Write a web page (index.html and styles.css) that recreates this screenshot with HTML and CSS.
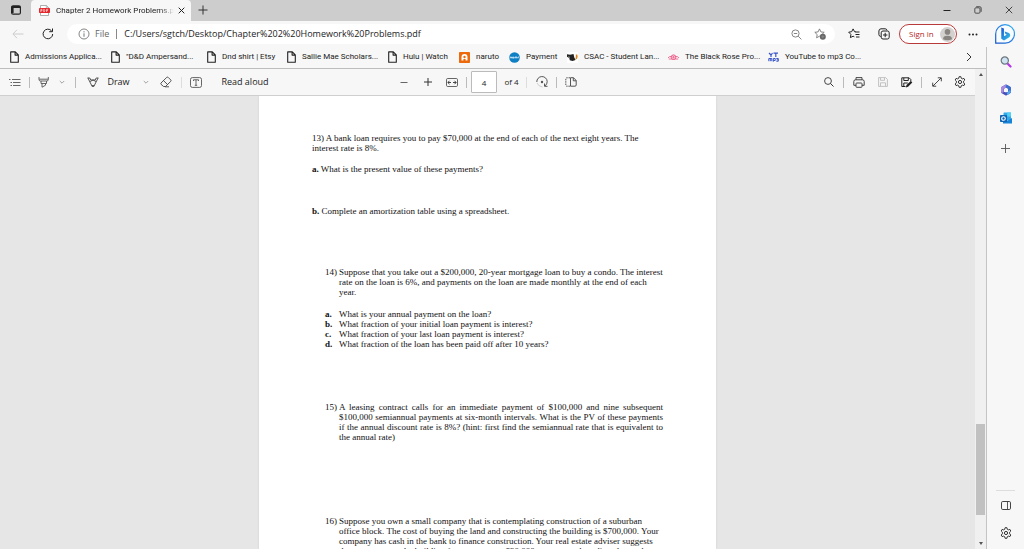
FILE: index.html
```html
<!DOCTYPE html>
<html lang="en">
<head>
<meta charset="utf-8">
<title>Chapter 2 Homework Problems.pdf</title>
<link rel="stylesheet" href="styles.css">
</head>
<body>
<svg class="defs" aria-hidden="true">
  <symbol id="doc" viewBox="0 0 9 12"><path d="M.7 .9h4.600l3 3v7.300H.7zM5.100 1v3.100h3.100" fill="none" stroke="#222" stroke-width="1.100" stroke-linejoin="round"/></symbol>
  <symbol id="chev" viewBox="0 0 6 6"><path d="M.8 2l2.200 2.200L5.200 2" fill="none" stroke="#999" stroke-width=".9"/></symbol>
  <symbol id="gear" viewBox="0 0 12 12"><path d="M5.100.7h1.800l.4 1.600 1 .6 1.600-.5.9 1.600-1.200 1.200v1.600l1.200 1.200-.9 1.600-1.600-.5-1 .6-.4 1.600H5.100l-.4-1.600-1-.6-1.600.5-.9-1.600 1.200-1.200V5.200L1.200 4l.9-1.600 1.600.5 1-.6z" fill="none" stroke="#333" stroke-width="1" stroke-linejoin="round"/><circle cx="6" cy="6" r="1.600" fill="none" stroke="#333"/></symbol>
</svg>

<header class="tabstrip">
  <button class="btn tabmenu" aria-label="Tab actions"><svg width="10" height="10" viewBox="0 0 10 10"><rect x=".6" y=".8" width="8.800" height="8.400" rx="1.500" fill="none" stroke="#222" stroke-width="1.200"/><path d="M.8 1.900h8.400M1.600 3v5" stroke="#222" stroke-width="2"/></svg></button>
  <div class="tab">
    <svg width="11" height="11" viewBox="0 0 11 11"><path d="M1.500.5h6l2 2v8h-8z" fill="#fff" stroke="#999" stroke-width=".8"/><path d="M7.300.6v2.200h2.200" fill="none" stroke="#999" stroke-width=".7"/><rect x="0" y="3" width="11" height="5" rx=".7" fill="#e5252a"/><path d="M1.800 7V4.300h1q1 .8 0 1.500h-.9M4.700 4.300V6.800h.6q1.200-1.200 0-2.400zM7.600 7V4.300h1.600M7.600 5.600h1.300" fill="none" stroke="#fff" stroke-width=".6"/></svg>
    <span class="tabtitle">Chapter 2 Homework Problems.pdf</span>
    <button class="btn tabclose" aria-label="Close tab"><svg width="7" height="7" viewBox="0 0 7 7"><path d="M.7.7l5.600 5.600M6.300.7L.7 6.300" stroke="#222" stroke-width="1"/></svg></button>
  </div>
  <button class="btn newtab" aria-label="New tab"><svg width="10" height="10" viewBox="0 0 10 10"><path d="M5 .5v9M.5 5h9" stroke="#333" stroke-width="1"/></svg></button>
  <div class="winctl">
    <button class="btn" aria-label="Minimize"><svg width="8" height="8" viewBox="0 0 8 8"><path d="M.5 4.500h7" stroke="#222"/></svg></button>
    <button class="btn" aria-label="Restore"><svg width="8" height="8" viewBox="0 0 8 8"><rect x=".8" y="1.800" width="5.200" height="5.400" rx="1" fill="none" stroke="#333" stroke-width=".8"/><path d="M2.200.7h3.500q1.500 0 1.500 1.500v3.600" fill="none" stroke="#333" stroke-width=".8"/></svg></button>
    <button class="btn" aria-label="Close"><svg width="8" height="8" viewBox="0 0 8 8"><path d="M.8.8l6.400 6.400M7.200.8L.8 7.200" stroke="#222" stroke-width=".8"/></svg></button>
  </div>
</header>

<div class="address-row">
  <button class="btn nav" aria-label="Back"><svg width="12" height="10" viewBox="0 0 12 10"><path d="M11.500 5H1M5 .8L.9 5 5 9.200" fill="none" stroke="#ccc"/></svg></button>
  <button class="btn nav" aria-label="Refresh"><svg width="12" height="12" viewBox="0 0 12 12"><path d="M10.700 6A4.800 4.800 0 1 1 9.600 2.900M10.500.5v3.200H7.200" fill="none" stroke="#222" stroke-width="1"/></svg></button>
  <div class="omnibox">
    <svg width="12" height="12" viewBox="0 0 12 12"><circle cx="6" cy="6" r="5" fill="none" stroke="#777" stroke-width=".9"/><path d="M6 5.300v3.500M6 3.200v1.200" stroke="#777"/></svg>
    <span class="scheme">File</span><span class="bar"></span>
    <input class="url" type="text" aria-label="Address" value="C:/Users/sgtch/Desktop/Chapter%202%20Homework%20Problems.pdf">
    <button class="btn" aria-label="Zoom out"><svg width="11" height="11" viewBox="0 0 11 11"><circle cx="4.500" cy="4.500" r="3.600" fill="none" stroke="#777" stroke-width=".9"/><path d="M7.200 7.200l3.200 3.200M2.800 4.500h3.400" stroke="#777" stroke-width=".9"/></svg></button>
    <button class="btn" aria-label="Add to favorites"><svg width="12" height="12" viewBox="0 0 12 12"><path d="M5.500.9l1.400 3 3.300.4-2.400 2.300.6 3.200-2.900-1.600-2.900 1.600.6-3.200L.8 4.300l3.300-.4z" fill="none" stroke="#777" stroke-width=".9" stroke-linejoin="round"/><circle cx="8.800" cy="8.700" r="3" fill="#666"/><path d="M8.800 7.200v3M7.300 8.700h3" stroke="#999" stroke-width=".6"/></svg></button>
  </div>
  <button class="btn fav" aria-label="Favorites"><svg width="12" height="12" viewBox="0 0 12 12"><path d="M8 3.900l-1.500-.2L5.100.9 3.700 3.700l-3 .5 2.200 2.200-.5 3.200 2.700-1.400 1.200.6M7.500 4h4M7.500 6.500h4M8 9h3.500" fill="none" stroke="#222" stroke-width="1" stroke-linejoin="round"/></svg></button>
  <button class="btn coll" aria-label="Collections"><svg width="12" height="12" viewBox="0 0 12 12"><path d="M2.700 8.500Q1 8.300.9 6.500V3Q1 .9 3 .8h4.200q1.500 0 1.800 1.600" fill="none" stroke="#222"/><rect x="3.200" y="3" width="8" height="8" rx="1.800" fill="none" stroke="#222"/><path d="M7.200 4.800v4.400M5 7h4.400" stroke="#222"/></svg></button>
  <button class="signin"><span>Sign in</span><svg width="15" height="15" viewBox="0 0 15 15"><circle cx="7.500" cy="7.500" r="7.500" fill="#d3d1cf"/><circle cx="7.500" cy="4.900" r="2.800" fill="#888581"/><path d="M3 12.200q0-3.400 4.500-3.400t4.500 3.400q-4.500 2-9 0z" fill="#888581"/></svg></button>
  <button class="btn dots" aria-label="More"><svg width="10" height="3" viewBox="0 0 10 3"><circle cx="1.500" cy="1.500" r="1" fill="#222"/><circle cx="5" cy="1.500" r="1" fill="#222"/><circle cx="8.500" cy="1.500" r="1" fill="#222"/></svg></button>
  <button class="btn bing" aria-label="Bing chat"><svg width="20" height="20" viewBox="0 0 20 20"><defs><linearGradient id="bg" x1="0" y1="1" x2="1" y2="0"><stop offset="0" stop-color="#1657c8"/><stop offset=".6" stop-color="#2b86ea"/><stop offset="1" stop-color="#35b9ee"/></linearGradient><linearGradient id="bb" x1="0" y1="0" x2="1" y2="1"><stop offset="0" stop-color="#1c56d6"/><stop offset="1" stop-color="#35c8e4"/></linearGradient></defs><path d="M.7 19.200V10A9.400 9.300 0 1 1 10 19.200z" fill="#f8fcff" stroke="url(#bg)" stroke-width="1.200"/><path d="M6.300 3.500l2.700 1v7.700l2.800-1.500-1.300-.8-.9-2.500 4.400 1.600q2.300 2.200.3 4.200L9 16.500l-2.700-1.700z" fill="url(#bb)"/></svg></button>
</div>

<div class="body">
  <div class="content">
    <nav class="bookmarks">
      <a href="#"><svg width="9" height="12"><use href="#doc"/></svg>Admissions Applica...</a>
      <a href="#"><svg width="9" height="12"><use href="#doc"/></svg>"D&amp;D Ampersand...</a>
      <a href="#"><svg width="9" height="12"><use href="#doc"/></svg>Dnd shirt | Etsy</a>
      <a href="#"><svg width="9" height="12"><use href="#doc"/></svg>Sallie Mae Scholars...</a>
      <a href="#"><svg width="9" height="12"><use href="#doc"/></svg>Hulu | Watch</a>
      <a href="#"><svg width="11" height="11" viewBox="0 0 11 11"><rect width="11" height="11" rx=".8" fill="#ec6a0c"/><path d="M2.500 8.500V5a3 3 0 0 1 6 0v3.500H6.600V7H4.400v1.500z" fill="#fff"/><circle cx="5.500" cy="5" r="1.200" fill="#ec6a0c"/></svg>naruto</a>
      <a href="#"><svg width="11" height="11" viewBox="0 0 11 11"><circle cx="5.500" cy="5.500" r="5.300" fill="#0f7fc4"/><path d="M1.300 6.300V5h1.200v1.300M3.600 5h1.100v1.200H3.600zM5.900 6.300V5h1v1.300M6.900 5h1v1.300M9 6.300V5h1" fill="none" stroke="#dff2ff" stroke-width=".8"/></svg>Payment</a>
      <a href="#"><svg width="11" height="11" viewBox="0 0 11 11"><rect width="11" height="11" fill="#fff"/><path d="M0 2.200l3 .6 3.500-.8.8 3.500 1.200 2.500-3 1-2.700-.7-.5-2.300L0 4.700z" fill="#222"/><path d="M8.800 2.500h1.400q1.500 4-2 5.500.8-2.500.6-5.500z" fill="#d98420"/><path d="M1.500 4.500l1.500 1" stroke="#aaa" stroke-width=".8"/></svg>CSAC - Student Lan...</a>
      <a href="#"><svg width="11" height="7" viewBox="0 0 11 7"><path d="M0 4q1.500-2 3-1.500M11 4Q9.500 2 8 2.500M.8 5h9.400" fill="none" stroke="#ee6c93"/><circle cx="5.500" cy="3.200" r="2.300" fill="#fbd3df" stroke="#ee5b87"/><path d="M4.200 3.200h2.600M5.500 2v2.500" stroke="#ee5b87" stroke-width=".7"/></svg>The Black Rose Pro...</a>
      <a href="#"><svg width="11" height="10" viewBox="0 0 11 10"><path d="M1 1l2 2 1.500-2M3 3v2M5.500 1.200H10M7.800 1.200V5" fill="none" stroke="#3a56c8" stroke-width="1.200"/><path d="M.8 9.200V6.500h3v2.700M2.300 6.500v2.700M5.300 9.700V6.500h1.900v2H5.300M8.300 6.500h2v2.700h-2M8.700 7.800h1.600" fill="none" stroke="#3a56c8"/></svg>YouTube to mp3 Co...</a>
      <button class="btn" aria-label="More favorites"><svg width="6" height="10" viewBox="0 0 6 10"><path d="M1 1l4 4-4 4" fill="none" stroke="#333" stroke-width="1"/></svg></button>
    </nav>

    <div class="viewer">
      <div class="pane">
        <div class="pdfbar">
          <div class="group left">
            <button class="btn" aria-label="Contents"><svg width="12" height="9" viewBox="0 0 12 9"><path d="M3 1.500h8.500M4 4.500h7.500M4 7.500h7.500M0 1.500h1.500M1.500 4.500H3M1.500 7.500H3" stroke="#666"/></svg></button>
            <i class="sep"></i>
            <button class="btn" aria-label="Highlight"><svg width="12" height="12" viewBox="0 0 12 12"><path d="M1 1v2.500q0 1.500 1.500 1.500h6.300q1.500 0 1.500-1.500V1M1.200 3.200h9M3 5v2.500h5.500V5M4 7.500v3.700l3.500-2V7.500" fill="none" stroke="#555" stroke-width=".9"/></svg></button>
            <button class="btn" aria-label="Highlight options"><svg width="6" height="6"><use href="#chev"/></svg></button>
            <i class="sep"></i>
            <button class="btn draw"><svg width="12" height="11" viewBox="0 0 12 11"><path d="M.8.8l4.400 8.700h1.600L11.200.8M.8 1h2l1 2h4.400l1-2h2M3 4.500L6 3l3 1.500M4.800 8.600h2.400" fill="none" stroke="#444" stroke-width=".9" stroke-linejoin="round"/></svg>Draw</button>
            <button class="btn" aria-label="Draw options"><svg width="6" height="6"><use href="#chev"/></svg></button>
            <button class="btn" aria-label="Erase"><svg width="12" height="12" viewBox="0 0 12 12"><path d="M1 7l5.800-5.700q.7-.5 1.300 0l2.700 2.700q.6.700 0 1.300L5.500 10.500H3.600L1 8.300q-.5-.6 0-1.300zM3.500 4.600l4.100 4M5 10.800h4" fill="none" stroke="#444" stroke-width=".9"/></svg></button>
            <i class="sep light"></i>
            <button class="btn" aria-label="Add text"><svg width="12" height="11" viewBox="0 0 12 11"><rect x=".5" y=".6" width="11" height="9.800" rx="1.800" fill="none" stroke="#555" stroke-width=".9"/><path d="M3.500 4V2.800h5V4M6 2.800v5.500M4.800 8.300h2.400" fill="none" stroke="#555" stroke-width=".9"/></svg></button>
            <button class="btn">Read aloud</button>
          </div>
          <div class="group mid">
            <button class="btn" aria-label="Zoom out"><svg width="8" height="8" viewBox="0 0 8 8"><path d="M.5 4.500h7" stroke="#666"/></svg></button>
            <button class="btn" aria-label="Zoom in"><svg width="8" height="8" viewBox="0 0 8 8"><path d="M0 4h8M4 0v8" stroke="#333"/></svg></button>
            <button class="btn" aria-label="Fit to width"><svg width="12" height="9" viewBox="0 0 12 9"><rect x=".5" y=".5" width="11" height="8" rx="1.200" fill="none" stroke="#555" stroke-width=".9"/><path d="M2 4.500h3M7 4.500h3M3.500 2.800L1.800 4.500l1.700 1.700M8.500 2.800l1.700 1.700-1.700 1.700" fill="none" stroke="#333" stroke-width=".9"/></svg></button>
            <i class="sep"></i>
            <input class="pageno" type="text" value="4" aria-label="Page number">
            <span class="of">of 4</span>
            <i class="sep light"></i>
            <button class="btn" aria-label="Rotate"><svg width="12" height="12" viewBox="0 0 12 12"><path d="M.8 6A5.200 5.200 0 0 1 11.200 5.500Q11.300 8 9 10M11.500 10.300H8.500V7.500" fill="none" stroke="#444" stroke-width=".9"/><circle cx="6" cy="6" r="1.200" fill="#555"/><path d="M1 7q1.500 3.500 5.500 4" fill="none" stroke="#bbb" stroke-width=".7"/></svg></button>
            <i class="sep"></i>
            <button class="btn" aria-label="Page view"><svg width="12" height="10" viewBox="0 0 12 10"><path d="M5 .8H2Q.8.8.8 2v6q0 1.200 1.200 1.200h3" fill="none" stroke="#444" stroke-dasharray="1.500 .8" stroke-width=".9"/><path d="M5.500.7h3l2.700 2.800V8q0 1.200-1.200 1.200H5.500zM8.300.8v3h2.800" fill="none" stroke="#444" stroke-width=".9"/></svg></button>
          </div>
          <div class="group right">
            <button class="btn" aria-label="Find"><svg width="10" height="10" viewBox="0 0 10 10"><circle cx="4" cy="4" r="3.400" fill="none" stroke="#333" stroke-width=".9"/><path d="M6.500 6.500l3 3" stroke="#333"/></svg></button>
            <i class="sep"></i>
            <button class="btn" aria-label="Print"><svg width="12" height="11" viewBox="0 0 12 11"><path d="M3 2.800V.6h6v2.200M3 8.300H.8V4.500q0-1.700 1.700-1.700h7q1.700 0 1.700 1.700v3.800H9" fill="none" stroke="#333" stroke-width=".9"/><rect x="3" y="6" width="6" height="4.300" rx=".7" fill="none" stroke="#333" stroke-width=".9"/></svg></button>
            <button class="btn" aria-label="Save" disabled><svg width="10" height="10" viewBox="0 0 10 10"><path d="M.6.6h7l1.800 1.800v7H.6zM2.500.8v2.500h4V.8M2.500 9.200V5.800h5v3.400" fill="none" stroke="#bbb" stroke-width=".9"/></svg></button>
            <button class="btn" aria-label="Save as"><svg width="12" height="11" viewBox="0 0 12 11"><path d="M4.500 9.500H.8V.8h7.300l1.700 1.700v2M2.800 1v2.500h4.500V1M2.800 9.300V6h4" fill="none" stroke="#222" stroke-width="1"/><path d="M4.800 10.500l.7-2.500 4.300-4 1.500 1.600-4.200 4.200z" fill="#222"/></svg></button>
            <i class="sep"></i>
            <button class="btn" aria-label="Full screen"><svg width="10" height="10" viewBox="0 0 10 10"><path d="M1 9l8-8M5.800.8h3.500v3.500M.7 5.700v3.500h3.500" fill="none" stroke="#333" stroke-width=".9"/></svg></button>
            <button class="btn" aria-label="Settings"><svg width="12" height="12"><use href="#gear"/></svg></button>
          </div>
        </div>
        <main class="canvas">
          <article class="page">
            <p>13) A bank loan requires you to pay $70,000 at the end of each of the next eight years. The<br>interest rate is 8%.</p>
            <p class="part-a"><b>a.</b> What is the present value of these payments?</p>
            <p class="part-b"><b>b.</b> Complete an amortization table using a spreadsheet.</p>
            <div class="item q14"><span>14)</span><p>Suppose that you take out a $200,000, 20-year mortgage loan to buy a condo. The interest<br>rate on the loan is 6%, and payments on the loan are made monthly at the end of each<br>year.</p></div>
            <div class="parts">
              <div class="item"><b>a.</b><span>What is your annual payment on the loan?</span></div>
              <div class="item"><b>b.</b><span>What fraction of your initial loan payment is interest?</span></div>
              <div class="item"><b>c.</b><span>What fraction of your last loan payment is interest?</span></div>
              <div class="item"><b>d.</b><span>What fraction of the loan has been paid off after 10 years?</span></div>
            </div>
            <div class="item q15"><span>15)</span><p>A leasing contract calls for an immediate payment of $100,000 and nine subsequent $100,000 semiannual payments at six-month intervals. What is the PV of these payments if the annual discount rate is 8%? (hint: first find the semiannual rate that is equivalent to the annual rate)</p></div>
            <div class="item q16"><span>16)</span><p>Suppose you own a small company that is contemplating construction of a suburban<br>office block. The cost of buying the land and constructing the building is $700,000. Your<br>company has cash in the bank to finance construction. Your real estate adviser suggests<br>that you can rent the building for two years at $30,000 per year and predicts that at the</p></div>
          </article>
        </main>
      </div>
      <div class="scrollbar"><i class="up"></i><i class="track"></i><i class="thumb"></i><i class="rest"></i><i class="down"></i></div>
    </div>
  </div>

  <aside class="sidebar">
    <button class="btn" aria-label="Search"><svg width="12" height="12" viewBox="0 0 12 12"><path d="M7.500 7.500l3 3" stroke="#b535e8" stroke-width="2.200" stroke-linecap="round"/><circle cx="4.800" cy="4.500" r="3.600" fill="#cfe4f2" stroke="#6d7780" stroke-width="1.200"/></svg></button>
    <button class="btn" aria-label="Microsoft 365"><svg width="12" height="12" viewBox="0 0 12 12"><path d="M6 1.900L9.500 4v4L6 10.100 2.500 8V4z" fill="none" stroke="#4a50b8" stroke-width="2.800" stroke-linejoin="round"/><path d="M2.300 7.500V4L6 1.900" fill="none" stroke="#a98be0" stroke-width="2.600" stroke-linecap="round"/><path d="M7 2.300L9.500 4v2.500" fill="none" stroke="#3b6fd0" stroke-width="2.600" stroke-linecap="round"/><path d="M9.700 7.500L8 9.500" fill="none" stroke="#4fa6ec" stroke-width="2.400" stroke-linecap="round"/></svg></button>
    <button class="btn" aria-label="Outlook"><svg width="12" height="12" viewBox="0 0 12 12"><rect x="3.500" y=".5" width="7.500" height="8" rx=".6" fill="#32a9e7"/><path d="M7.200.5H11v4H7.200z" fill="#50d0f5"/><path d="M3 6.500l4.500 2.200L12 6v5.500H3z" fill="#1784d8"/><rect x="0" y="3" width="7" height="7" rx=".7" fill="#0f65b5"/><circle cx="3.500" cy="6.500" r="1.800" fill="none" stroke="#fff" stroke-width="1.100"/></svg></button>
    <button class="btn add" aria-label="Customize"><svg width="9" height="9" viewBox="0 0 9 9"><path d="M4.500 0v9M0 4.500h9" stroke="#555" stroke-width=".9"/></svg></button>
    <hr>
    <button class="btn" aria-label="Hide sidebar"><svg width="10" height="9" viewBox="0 0 10 9"><rect x=".5" y=".5" width="9" height="8" rx="1.300" fill="none" stroke="#444"/><path d="M6.500.5v8" stroke="#444" stroke-width=".9"/></svg></button>
    <button class="btn" aria-label="Sidebar settings"><svg width="12" height="12"><use href="#gear"/></svg></button>
  </aside>
</div>
</body>
</html>
```

FILE: styles.css
```css
* { box-sizing: border-box; }

body {
  margin: 0;
  height: 100vh;
  overflow: hidden;
  display: flex;
  flex-direction: column;
  background: #f7f7f7;
  color: #222;
  font: 9px/12px "Open Sans", "Noto Sans", sans-serif;
}

p { margin: 0; }
svg { display: block; flex: none; }
.defs { position: absolute; width: 0; height: 0; }

.btn {
  display: flex;
  align-items: center;
  justify-content: center;
  height: 20px;
  padding: 0;
  border: 0;
  background: none;
  color: inherit;
  font: inherit;
  white-space: nowrap;
}

/* Tab strip */
.tabstrip { display: flex; align-items: stretch; flex: none; height: 21px; background: #cdcdcd; }
.tabmenu { width: 31px; }
.tab {
  display: flex;
  align-items: center;
  gap: 6px;
  width: 160px;
  padding-left: 8px;
  border-radius: 4px 4px 0 0;
  background: #f7f7f7;
}
.tabtitle {
  flex: 1;
  margin-right: -6px;
  overflow: hidden;
  white-space: nowrap;
  font-family: Roboto, sans-serif;
  font-size: 8px;
  mask-image: linear-gradient(to right, #000 88%, transparent);
}
.tabclose { width: 14px; margin-right: 3px; }
.newtab { width: 24px; }
.winctl { display: flex; margin-left: auto; }
.winctl .btn { width: 31px; }

/* Address row */
.address-row { display: flex; align-items: center; flex: none; height: 26px; padding: 0 3px; }
.nav { width: 30px; }
.omnibox {
  display: flex;
  align-items: center;
  flex: 1;
  height: 20px;
  margin: 0 5px 0 4px;
  padding: 0 3px 0 11px;
  border-radius: 10px;
  background: #fff;
}
.omnibox .btn { width: 24px; }
.scheme { margin-left: 5px; color: #666; }
.bar { width: 1px; height: 10px; margin: 0 7px; background: #888; }
.url { flex: 1; min-width: 0; padding: 0; border: 0; background: none; color: #222; font: inherit; outline: 0; }
.fav { width: 28px; }
.coll { width: 31px; }
.signin {
  display: flex;
  align-items: center;
  justify-content: space-between;
  width: 58px;
  height: 20px;
  padding: 0 1px 0 9px;
  border: 1px solid #b93a3a;
  border-radius: 10px;
  background: #fff;
  color: #b3261e;
  font: 8px/12px "Open Sans", "Noto Sans", sans-serif;
  white-space: nowrap;
}
.dots { width: 32px; }
.bing { width: 32px; }

/* Bookmarks */
.body { display: flex; flex: 1; min-height: 0; }
.content { display: flex; flex-direction: column; flex: 1; min-width: 0; }
.bookmarks {
  display: grid;
  grid-template-columns: 101px 96px 80px 101px 71px 50px 58px 101px 100px 1fr 34px;
  align-items: center;
  flex: none;
  height: 22px;
  padding: 0 0 2px 10px;
  border-bottom: 1px solid #bdbdbd;
  font-family: Roboto, sans-serif;
  font-size: 8px;
}
.bookmarks a { display: flex; align-items: center; gap: 6px; color: inherit; text-decoration: none; white-space: nowrap; }

/* PDF viewer */
.viewer { display: flex; flex: 1; min-height: 0; }
.pane { display: flex; flex-direction: column; flex: 1; min-width: 0; }
.pdfbar { display: flex; align-items: center; flex: none; height: 27px; padding: 0 3px 0 5px; border-bottom: 1px solid #cfcfcf; }
.group { display: grid; align-items: center; justify-items: center; }
.left { grid-template-columns: 19px 11px 17px 20px 7px 59px 16px 24px 6px 24px 74px; }
.mid { grid-template-columns: 25px 23px 26px 3px 32px 23px 7px 23px 6px 24px; margin-left: 109px; }
.right { grid-template-columns: 23px 7px 23px 25px 23px 7px 23px 24px; margin-left: auto; }
.sep { width: 1px; height: 11px; background: #bbb; }
.light { background: #ddd; }
.draw { gap: 8px; }
.pageno {
  width: 26px;
  height: 22px;
  padding: 0;
  border: 1px solid #bbb;
  border-radius: 1px;
  background: #fff;
  color: #222;
  font: inherit;
  font-size: 8px;
  text-align: center;
}
.of { font-size: 8px; white-space: nowrap; }

.canvas { display: flex; justify-content: center; flex: 1; min-height: 0; overflow: hidden; background: #e6e6e6; }
.page {
  width: 457px;
  flex: none;
  padding: 37px 53px 0 53px;
  background: #fff;
  color: #111;
  box-shadow: 0 0 2px #ccc;
  font: 9px/10px "Liberation Serif", "Times New Roman", serif;
}
.part-a { margin-top: 11px; }
.part-b { margin-top: 32px; }
.item { display: grid; grid-template-columns: 14px 1fr; padding-left: 13px; white-space: nowrap; }
.q14 { margin-top: 51px; }
.parts { margin-top: 12px; }
.q15 { margin-top: 53px; text-align: justify; }
.q15 p { white-space: normal; }
.q16 { margin-top: 74px; }

.scrollbar { display: flex; flex-direction: column; align-items: center; width: 11px; background: #f0f0f0; }
.up { margin-top: 4px; border: 2px solid transparent; border-top: 0; border-bottom: 3px solid #555; }
.track { flex: 348; }
.thumb { flex: 91; width: 9px; background: #c1c1c1; }
.rest { flex: 27; }
.down { margin-bottom: 4px; border: 2px solid transparent; border-bottom: 0; border-top: 3px solid #555; }

/* Sidebar */
.sidebar {
  display: flex;
  flex-direction: column;
  align-items: center;
  gap: 8px;
  width: 38px;
  padding: 5px 0 6px;
  border-left: 1px solid #c4c4c4;
}
.sidebar .btn { width: 28px; }
.sidebar .add { margin-top: 2px; }
.sidebar hr { width: 19px; height: 1px; margin: auto 0 -4px; border: 0; background: #ddd; }
```
